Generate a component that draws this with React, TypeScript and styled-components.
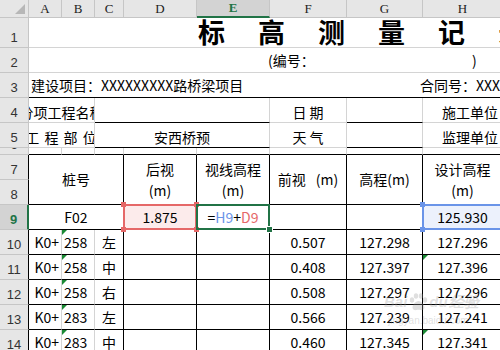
import React from 'react';
import styled, { createGlobalStyle, css } from 'styled-components';

const GRID = '#d4d4d4';
const INK = '#000';
const HEAD_BG = '#e6e6e6';
const HEAD_SEL = '#d3d3d3';
const HEAD_LINE = '#c6c6c6';
const GREEN = '#217346';
const RED = '#e56868';
const BLUE = '#6a94e8';

type Line = 'grid' | 'ink';
type Place = { $col: number; $row: number; $cs?: number; $rs?: number };

const GlobalStyle = createGlobalStyle`
  *, *::before, *::after { box-sizing: border-box; }
  html, body { margin: 0; background: #fff; }
  body { font-family: "Noto Sans CJK SC", sans-serif; overflow: hidden; }
`;

const place = css<Place>`
  grid-column: ${p => `${p.$col} / span ${p.$cs ?? 1}`};
  grid-row: ${p => `${p.$row} / span ${p.$rs ?? 1}`};
`;

const Sheet = styled.div`
  position: relative;
  display: grid;
  grid-template-columns: 29px 33px 33px 29px 73px 73px 77px 76px 80px;
  grid-template-rows: 18px 30px 25px 25px 25px 25px 7px 25px 25px 25px 25px 25px 25px 25px 25px;
  width: 500px;
  height: 350px;
  overflow: hidden;
  background: #fff;
  color: #000;
  font-family: "Noto Sans CJK SC", sans-serif;
`;

const Corner = styled.div`
  grid-column: 1;
  grid-row: 1;
  display: flex;
  align-items: flex-end;
  justify-content: flex-end;
  padding: 0 3px 3px 0;
  background: ${HEAD_BG};
  border-right: 1px solid ${HEAD_LINE};
  border-bottom: 1px solid ${HEAD_LINE};
`;

const CornerMark = styled.span`
  width: 0;
  height: 0;
  border-left: 10px solid transparent;
  border-bottom: 10px solid #b7b7b7;
`;

const ColHead = styled.div<Place & { $sel?: boolean }>`
  ${place};
  display: flex;
  align-items: center;
  justify-content: center;
  background: ${p => (p.$sel ? HEAD_SEL : HEAD_BG)};
  border-right: 1px solid ${HEAD_LINE};
  border-bottom: ${p => (p.$sel ? `2px solid ${GREEN}` : `1px solid ${HEAD_LINE}`)};
  color: ${p => (p.$sel ? GREEN : '#222')};
  font-family: "Liberation Serif", serif;
  font-size: 13px;
  font-weight: ${p => (p.$sel ? 700 : 400)};
  line-height: 14px;
`;

const RowHead = styled.div<Place & { $sel?: boolean; $edge: string }>`
  ${place};
  display: flex;
  align-items: flex-end;
  justify-content: center;
  overflow: hidden;
  padding-bottom: 1px;
  background: ${p => (p.$sel ? HEAD_SEL : HEAD_BG)};
  border-right: ${p => (p.$sel ? `2px solid ${GREEN}` : `1px solid ${p.$edge}`)};
  border-bottom: 1px solid ${HEAD_LINE};
  color: ${p => (p.$sel ? GREEN : '#333')};
  font-family: "Liberation Sans", sans-serif;
  font-size: 13px;
  font-weight: ${p => (p.$sel ? 700 : 400)};
  line-height: 16px;
`;

const Cell = styled.div<
  Place & {
    $r?: Line;
    $b?: Line;
    $h?: 'left' | 'center' | 'right';
    $v?: 'middle' | 'bottom';
    $fill?: string;
    $pad?: number;
    $clip?: boolean;
  }
>`
  ${place};
  position: relative;
  display: flex;
  align-items: ${p => (p.$v === 'bottom' ? 'flex-end' : 'center')};
  justify-content: ${p => (p.$h === 'left' ? 'flex-start' : p.$h === 'right' ? 'flex-end' : 'center')};
  min-width: 0;
  overflow: ${p => (p.$clip ? 'clip' : 'visible')};
  padding: 0 ${p => p.$pad ?? 2}px ${p => (p.$v === 'bottom' ? 1 : 0)}px;
  background: ${p => p.$fill ?? 'transparent'};
  border-right: 1px solid ${p => (p.$r === 'ink' ? INK : GRID)};
  border-bottom: 1px solid ${p => (p.$b === 'ink' ? INK : GRID)};
  font-size: 14px;
  line-height: 17px;
  white-space: nowrap;
`;

const Label = styled.span`
  flex: none;
`;

const Title = styled.div`
  padding-left: 169px;
  font-size: 27px;
  font-weight: 700;
  line-height: 29px;
  letter-spacing: 33px;
`;

const Split = styled.div<{ $cols: string; $pl: number }>`
  display: grid;
  grid-template-columns: ${p => p.$cols};
  width: 100%;
  padding-left: ${p => p.$pl}px;
  white-space: nowrap;
`;

const Spaced = styled(Label)`
  letter-spacing: 1px;
`;

const Stack = styled.div`
  display: flex;
  flex-direction: column;
  align-items: center;
  line-height: 21px;
`;

const Unit = styled.span<{ $gap?: number }>`
  margin-left: ${p => p.$gap ?? 0}px;
`;

const Ref = styled.span<{ $color: string }>`
  color: ${p => p.$color};
`;

const Flag = styled.span`
  position: absolute;
  top: 0;
  left: 0;
  width: 0;
  height: 0;
  border-top: 5px solid #1a8a34;
  border-right: 5px solid transparent;
`;

const Selection = styled.div<Place & { $color: string }>`
  ${place};
  position: relative;
  z-index: 2;
  margin: -1px 0 0 -1px;
  border: 2px solid ${p => p.$color};
  pointer-events: none;
`;

const Handle = styled.span<{ $color: string; $x: 'left' | 'right'; $y: 'top' | 'bottom'; $ring?: boolean }>`
  position: absolute;
  ${p => p.$x}: -4px;
  ${p => p.$y}: -4px;
  width: 5px;
  height: 5px;
  background: ${p => p.$color};
  box-shadow: ${p => (p.$ring ? '0 0 0 1px #fff' : 'none')};
`;

const Watermark = styled.div`
  position: absolute;
  left: 384px;
  top: 293px;
  z-index: 3;
  color: rgba(150, 150, 150, 0.3);
  font-family: "Liberation Sans", sans-serif;
  pointer-events: none;
`;

const MarkLine = styled.div`
  display: flex;
  align-items: flex-end;
  gap: 1px;
  font-size: 15px;
  font-weight: 700;
  font-style: italic;
  line-height: 18px;
`;

const MarkSub = styled.div`
  margin: 4px 0 0 4px;
  font-size: 10px;
  line-height: 11px;
`;

const COLS = ['A', 'B', 'C', 'D', 'E', 'F', 'G', 'H'];

const STATIONS = [
  { k: '258', side: '左', fore: '0.507', elev: '127.298', design: '127.296', flag: false },
  { k: '258', side: '中', fore: '0.408', elev: '127.397', design: '127.396', flag: true },
  { k: '258', side: '右', fore: '0.508', elev: '127.297', design: '127.296', flag: false },
  { k: '283', side: '左', fore: '0.566', elev: '127.239', design: '127.241', flag: false },
  { k: '283', side: '中', fore: '0.460', elev: '127.345', design: '127.341', flag: true },
];

const corners: Array<['left' | 'right', 'top' | 'bottom']> = [
  ['left', 'top'],
  ['right', 'top'],
  ['left', 'bottom'],
  ['right', 'bottom'],
];

const Paw = () => (
  <svg width="20" height="18" viewBox="0 0 20 18" fill="currentColor">
    <ellipse cx="4" cy="7" rx="2.2" ry="2.8" />
    <ellipse cx="8" cy="3" rx="2.2" ry="2.8" />
    <ellipse cx="13" cy="3" rx="2.2" ry="2.8" />
    <ellipse cx="17" cy="7" rx="2.2" ry="2.8" />
    <path d="M10.5 8c-3 0-6 4-6 6.5 0 2 2 3 4 2.5 1.5-.4 2.5-.4 4 0 2 .5 4-.5 4-2.5C16.5 12 13.5 8 10.5 8z" />
  </svg>
);

export default function App() {
  return (
    <>
      <GlobalStyle />
      <Sheet>
        <Corner>
          <CornerMark />
        </Corner>
        {COLS.map((c, i) => (
          <ColHead key={c} $col={i + 2} $row={1} $sel={c === 'E'}>
            {c}
          </ColHead>
        ))}
        {Array.from({ length: 14 }, (_, i) => i + 1).map(n => (
          <RowHead key={n} $col={1} $row={n + 1} $sel={n === 9} $edge={n >= 7 ? INK : HEAD_LINE}>
            {n}
          </RowHead>
        ))}

        <Cell $col={2} $row={2} $cs={8} $h="left" $v="bottom" $pad={0}>
          <Title>标高测量记录</Title>
        </Cell>

        <Cell $col={2} $row={3} $cs={8} $h="left" $pad={0}>
          <Split $cols="204px auto" $pl={239}>
            <span>(编号：</span>
            <span>)</span>
          </Split>
        </Cell>

        <Cell $col={2} $row={4} $cs={8} $h="left" $pad={0} $b="ink" $clip>
          <Split $cols="389px auto" $pl={2}>
            <span>建设项目：XXXXXXXXX路桥梁项目</span>
            <span>合同号：XXXXXXXXX</span>
          </Split>
        </Cell>

        <Cell $col={2} $row={5} $cs={2} $v="bottom" $pad={0} $clip>
          <Label>分项工程名称</Label>
        </Cell>
        <Cell $col={4} $row={5} $cs={3} $b="ink" />
        <Cell $col={7} $row={5} $v="bottom">
          日 期
        </Cell>
        <Cell $col={8} $row={5} $b="ink" />
        <Cell $col={9} $row={5} $h="right" $v="bottom" $pad={4}>
          施工单位
        </Cell>

        <Cell $col={2} $row={6} $cs={2} $v="bottom" $pad={0} $clip>
          <Spaced>工 程 部 位</Spaced>
        </Cell>
        <Cell $col={4} $row={6} $cs={3} $v="bottom" $b="ink">
          安西桥预
        </Cell>
        <Cell $col={7} $row={6} $v="bottom">
          天 气
        </Cell>
        <Cell $col={8} $row={6} $b="ink" />
        <Cell $col={9} $row={6} $h="right" $v="bottom" $pad={4}>
          监理单位
        </Cell>

        {COLS.map((c, i) => (
          <Cell key={c} $col={i + 2} $row={7} $b="ink" />
        ))}

        <Cell $col={2} $row={8} $cs={3} $rs={2} $r="ink" $b="ink">
          桩号
        </Cell>
        <Cell $col={5} $row={8} $rs={2} $r="ink" $b="ink">
          <Stack>
            <span>后视</span>
            <span>(m)</span>
          </Stack>
        </Cell>
        <Cell $col={6} $row={8} $rs={2} $r="ink" $b="ink">
          <Stack>
            <span>视线高程</span>
            <span>(m)</span>
          </Stack>
        </Cell>
        <Cell $col={7} $row={8} $rs={2} $r="ink" $b="ink">
          前视<Unit $gap={10}>(m)</Unit>
        </Cell>
        <Cell $col={8} $row={8} $rs={2} $r="ink" $b="ink">
          高程(m)
        </Cell>
        <Cell $col={9} $row={8} $rs={2} $r="ink" $b="ink">
          <Stack>
            <span>设计高程</span>
            <span>(m)</span>
          </Stack>
        </Cell>

        <Cell $col={2} $row={10} $cs={3} $r="ink" $b="ink">
          F02
        </Cell>
        <Cell $col={5} $row={10} $r="ink" $b="ink" $fill="#fcebeb">
          1.875
        </Cell>
        <Cell $col={6} $row={10} $r="ink" $b="ink">
          =<Ref $color={BLUE}>H9</Ref>+<Ref $color={RED}>D9</Ref>
        </Cell>
        <Cell $col={7} $row={10} $r="ink" $b="ink" />
        <Cell $col={8} $row={10} $r="ink" $b="ink" />
        <Cell $col={9} $row={10} $r="ink" $b="ink" $fill="#ecf1fc">
          125.930
        </Cell>

        <Selection $col={5} $row={10} $color={RED}>
          {corners.map(([x, y]) => (
            <Handle key={x + y} $x={x} $y={y} $color={RED} />
          ))}
        </Selection>
        <Selection $col={6} $row={10} $color={GREEN}>
          <Handle $x="right" $y="bottom" $color={GREEN} $ring />
        </Selection>
        <Selection $col={9} $row={10} $color={BLUE}>
          {corners.map(([x, y]) => (
            <Handle key={x + y} $x={x} $y={y} $color={BLUE} />
          ))}
        </Selection>

        {STATIONS.map((s, i) => {
          const row = 11 + i;
          return (
            <React.Fragment key={row}>
              <Cell $col={2} $row={row} $b="ink" $h="right">
                K0+
              </Cell>
              <Cell $col={3} $row={row} $b="ink" $h="left">
                <Flag />
                {s.k}
              </Cell>
              <Cell $col={4} $row={row} $r="ink" $b="ink">
                {s.side}
              </Cell>
              <Cell $col={5} $row={row} $r="ink" $b="ink" />
              <Cell $col={6} $row={row} $r="ink" $b="ink" />
              <Cell $col={7} $row={row} $r="ink" $b="ink">
                {s.fore}
              </Cell>
              <Cell $col={8} $row={row} $r="ink" $b="ink">
                {s.elev}
              </Cell>
              <Cell $col={9} $row={row} $r="ink" $b="ink">
                {s.flag && <Flag />}
                {s.design}
              </Cell>
            </React.Fragment>
          );
        })}

        <Watermark>
          <MarkLine>
            <span>Bai</span>
            <Paw />
            <span>du</span>
            <span>经验</span>
          </MarkLine>
          <MarkSub>jingyan.baidu.com</MarkSub>
        </Watermark>
      </Sheet>
    </>
  );
}
